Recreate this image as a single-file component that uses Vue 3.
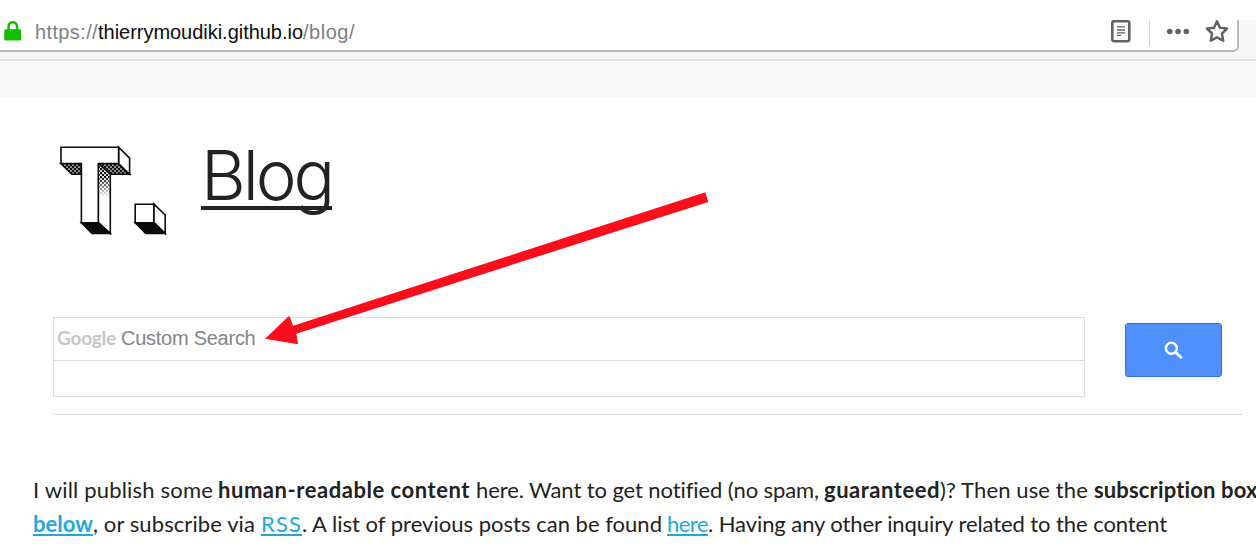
<script setup>
const lines = [
  [
    { t: 'I will publish some', w: 180, g: 5 },
    { t: 'human-readable content', w: 252, g: 6, b: true },
    { t: 'here. Want to get notified (no spam,', w: 343, g: 5 },
    { t: 'guaranteed', w: 116, g: 0, b: true },
    { t: ')? Then use the', w: 148, g: 6 },
    { t: 'subscription box', w: 164, g: 0, b: true },
  ],
  [
    { t: 'below', w: 60, g: 0, b: true, a: true },
    { t: ', or subscribe via', w: 162, g: 6 },
    { t: 'RSS', w: 41, g: 0, a: true },
    { t: '. A list of previous posts can be found', w: 360, g: 5 },
    { t: 'here', w: 41, g: 0, a: true },
    { t: '. Having any other inquiry related to the content', w: 459, g: 0 },
  ],
]

// Spreads the letters of a text run over the given width.
const vFit = {
  mounted(el, { value }) {
    const natural = el.getBoundingClientRect().width
    const spacing = (value - natural) / el.textContent.length
    el.style.letterSpacing = `${spacing}px`
  },
}
</script>

<template>
  <div class="page">
    <header class="chrome">
      <div class="bar">
        <svg class="lock" width="18" height="20" viewBox="0 0 18 20">
          <path d="M4.6 9V5.4a4.2 4.2 0 0 1 8.4 0V9" fill="none" stroke="#12bc00" stroke-width="2.5" />
          <rect x="0.2" y="8.2" width="17" height="11.3" rx="1.6" fill="#12bc00" />
        </svg>
        <div class="url">
          <span v-fit="63">https://</span><span v-fit="205" class="host">thierrymoudiki.github.io</span><span v-fit="52">/blog/</span>
        </div>
        <svg class="tools" width="134" height="30" viewBox="1104 20 134 30">
          <rect x="1112.3" y="21.2" width="17" height="20" rx="2" fill="none" stroke="#626262" stroke-width="2.6" />
          <path d="M1117 26.8h8M1117 30h8M1117 32.8h8M1117 35.4h4" stroke="#626262" stroke-width="1.3" />
          <path d="M1149.5 20v26" stroke="#d0d0d0" />
          <g fill="#626262"><circle cx="1169.7" cy="31.5" r="2.8" /><circle cx="1178" cy="31.5" r="2.8" /><circle cx="1186.3" cy="31.5" r="2.8" /></g>
          <path d="M1217 21.4l3 6.3 7 .9-5 4.9 1.2 7.2-6.2-3.3-6.2 3.3 1.2-7.2-5-4.9 7-.9z" fill="none" stroke="#626262" stroke-width="2.5" stroke-linejoin="round" />
        </svg>
      </div>
    </header>
    <div class="strip"></div>
    <div class="brand">
      <svg class="logo" width="112" height="94" viewBox="57 143 112 94">
        <defs>
          <pattern id="dots" width="4" height="4" patternUnits="userSpaceOnUse">
            <rect width="4" height="4" fill="#111" />
            <circle cx="1" cy="1" r=".85" fill="#fff" /><circle cx="3" cy="3" r=".85" fill="#fff" />
          </pattern>
          <pattern id="specks" width="4" height="4" patternUnits="userSpaceOnUse">
            <circle cx="1" cy="1" r="1.3" fill="#111" /><circle cx="3" cy="3" r="1.3" fill="#111" />
          </pattern>
          <linearGradient id="fade" x1="0" y1="0" x2="0" y2="1">
            <stop offset=".4" stop-color="#fff" /><stop offset="1" stop-color="#fff" stop-opacity="0" />
          </linearGradient>
          <mask id="fadeMask"><rect x="98" y="163" width="14" height="34" fill="url(#fade)" /></mask>
        </defs>
        <g stroke="#0a0a0a" stroke-width="1.6" stroke-linejoin="miter">
          <path d="M61 163.5h20.4v10.7h-9.6z" fill="url(#dots)" />
          <path d="M98.3 163.5h20l11.4 10.7h-19.4z" fill="url(#dots)" />
          <path d="M118.6 147.2l11 11v16l-11-10.7z" fill="#fff" />
          <path d="M98.3 163.5l12 10.7v59.3l-12-10.8z" fill="#fff" />
          <path d="M81.4 222.7h16.9l12 10.8H92z" fill="#0a0a0a" />
          <path d="M61 147.2h57.6v16.3H98.3v59.2H81.4v-59.2H61z" fill="#fff" />
          <path d="M135.2 204.2h18.8v18.5h-18.8z" fill="#fff" />
          <path d="M154 204.2l11.2 10.8v18.5L154 222.7z" fill="#fff" />
          <path d="M135.2 222.7H154l11.2 10.8h-19.4z" fill="#0a0a0a" />
        </g>
        <path d="M99.2 165l10.3 9.6V197H99.2z" fill="url(#specks)" mask="url(#fadeMask)" />
      </svg>
      <h1><span v-fit="131">Blog</span></h1>
    </div>
    <div class="search">
      <div class="fields">
        <div class="field top">
          <span v-fit="59" class="google">Google</span><span v-fit="134.5" class="custom">Custom Search</span>
        </div>
        <div class="field"></div>
      </div>
      <button class="go" aria-label="Search">
        <svg width="20" height="20" viewBox="0 0 20 20" fill="none" stroke="#fff">
          <circle cx="7.4" cy="8.2" r="5.5" stroke-width="2.4" />
          <path d="M11.3 12.1l6.5 6.2" stroke-width="2.8" />
        </svg>
      </button>
    </div>
    <div class="copy">
      <p v-for="(line, i) in lines" :key="i">
        <component :is="s.a ? 'a' : 'span'" v-for="(s, j) in line" :key="j" class="seg" :class="{ bold: s.b, link: s.a }" :style="{ marginRight: s.g + 'px' }"><span v-fit="s.w">{{ s.t }}</span></component>
      </p>
    </div>
    <svg class="arrow" width="1256" height="544" viewBox="0 0 1256 544">
      <path d="M705.3 192.2l3 9.8-412 131.7 1.8 10.6L265 338.8l24.2-23 4 10z" fill="#fc0d1b" />
    </svg>
  </div>
</template>

<style>
body { margin: 0; overflow: hidden; }
</style>

<style scoped>
.page {
  position: relative;
  width: 1256px;
  height: 544px;
  overflow: hidden;
  background: #fff;
  font-family: "Liberation Sans", Arial, sans-serif;
}
.page span { white-space: pre; }
.chrome {
  box-sizing: border-box;
  height: 61px;
  padding-top: 20px;
  border-bottom: 2px solid #e2e2e2;
  background: linear-gradient(#fff 20px, #f7f7f7 20px);
}
.bar {
  box-sizing: border-box;
  width: 1239px;
  height: 32px;
  padding-left: 4px;
  display: flex;
  background: #fff;
  border: solid #b9b9b9;
  border-width: 0 2px 2px 0;
  border-radius: 0 0 6px 0;
}
.lock { margin-top: 1px; flex: none; }
.url { margin-left: 13px; flex: 1; font-size: 20px; line-height: 24px; color: #808080; }
.host { color: #0c0c0c; }
.tools { flex: none; margin-right: -1px; }
.strip { height: 36px; background: #f9f9f9; }
.brand { display: flex; height: 220px; box-sizing: border-box; padding: 46px 0 0 57px; }
.logo { flex: none; }
h1 {
  margin: -8px 0 0 32px;
  font: 300 69px/80px Inter, "Liberation Sans", sans-serif;
  color: #222;
  height: 67px;
}
h1 span { text-decoration: underline; text-decoration-thickness: 3.5px; text-underline-offset: 6px; text-decoration-skip-ink: none; }
.search {
  box-sizing: border-box;
  width: 1191px;
  height: 98px;
  margin-left: 52px;
  display: flex;
  border-bottom: 1px solid #dcdcdc;
}
.fields { box-sizing: border-box; width: 1032px; margin-left: 1px; height: 80px; border: 1px solid #dcdde0; }
.field { height: 36px; }
.top { height: 42px; border-bottom: 1px solid #dcdde0; line-height: 40px; display: flex; padding-left: 3px; }
.google { font: 700 19px/40px Lato, sans-serif; color: #c6c6c6; }
.custom { margin-left: 5px; font-size: 20px; color: #858585; }
.go {
  box-sizing: border-box;
  width: 97px;
  height: 54px;
  margin: 6px 0 0 40px;
  padding: 0;
  display: flex;
  align-items: center;
  justify-content: center;
  border: 1px solid #2f74ee;
  border-radius: 3px;
  background: #4d90fe;
}
.copy { margin: 58px 0 0 33px; width: 1300px; font: 400 22px/34px Lato, "Open Sans", sans-serif; color: #222; }
p { margin: 0; height: 34px; display: flex; }
.seg { flex: none; }
.bold { font-weight: 700; }
.link { color: #1fa8d8; text-decoration: underline; text-decoration-thickness: 1.5px; text-underline-offset: 2px; }
.arrow { position: absolute; left: 0; top: 0; pointer-events: none; }
</style>
